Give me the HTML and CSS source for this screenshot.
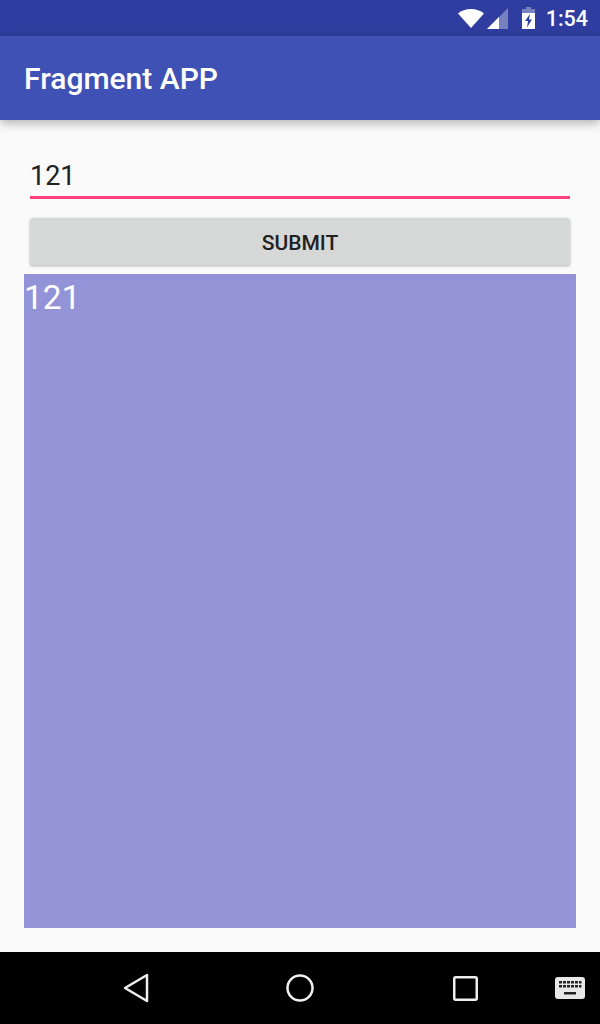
FILE: index.html
```html
<!DOCTYPE html>
<html>
<head>
    <title>Fragment APP</title>
    <link rel="stylesheet" href="styles.css">
</head>
<body>
  <div class="phone">
    <div class="statusbar">
      <svg class="ic-wifi" width="26" height="19" viewBox="0 0 26 19"><path d="M0 4.500C3.500 1.700 8 0 13 0S22.500 1.700 26 4.500L13 19z" fill="#fff"/></svg>
      <svg class="ic-signal" width="21" height="21" viewBox="0 0 21 21"><path d="M21 0V21H0z" fill="#fff" fill-opacity=".35"/><path d="M12 9V21H0z" fill="#fff"/></svg>
      <svg class="ic-battery" width="13" height="22" viewBox="0 0 13 22"><path d="M4 0H9V2H13V6H0V2H4z" fill="#fff" fill-opacity=".35"/><path fill-rule="evenodd" d="M0 6H13V22H0zM8 7 3 14H6L5 20.500 10 12.500H7z" fill="#fff"/></svg>
      <span class="clock">1:54</span>
    </div>
    <div class="toolbar">Fragment APP</div>
    <div class="content">
      <div class="field">121</div>
      <button class="submit">SUBMIT</button>
      <div class="fragment">121</div>
    </div>
    <div class="navbar">
      <svg class="ic-back" width="26" height="30" viewBox="0 0 26 30"><path d="M24 2V28L2 15z" fill="none" stroke="#eee" stroke-width="2.500" stroke-linejoin="round"/></svg>
      <svg class="ic-home" width="28" height="28" viewBox="0 0 28 28"><circle cx="14" cy="14" r="12.500" fill="none" stroke="#eee" stroke-width="2.500"/></svg>
      <svg class="ic-recent" width="25" height="25" viewBox="0 0 25 25"><rect x="1.250" y="1.250" width="22.500" height="22.500" rx="1.500" fill="none" stroke="#eee" stroke-width="2.500"/></svg>
      <svg class="ic-keyboard" width="30" height="22" viewBox="0 0 30 22">
        <rect width="30" height="22" rx="3" fill="#e8e8e8"/>
        <path d="M4 4h3v2.500H4zM8 4h3v2.500H8zM12 4h3v2.500h-3zM16 4h3v2.500h-3zM20 4h3v2.500h-3zM24 4h2.500v2.500H24zM4 8h3v2.500H4zM8 8h3v2.500H8zM12 8h3v2.500h-3zM16 8h3v2.500h-3zM20 8h3v2.500h-3zM24 8h2.500v2.500H24zM9 15h12v2.500H9z" fill="#222"/>
      </svg>
    </div>
  </div>
</body>
</html>
```

FILE: styles.css
```css
/* Resetting default margin and padding */
body, button {
    margin: 0;
    padding: 0;
    box-sizing: border-box;
}

body {
    font-family: Roboto, sans-serif;
    background-color: #fafafa;
}

.phone {
    display: flex;
    flex-direction: column;
    width: 600px;
    height: 1024px;
    overflow: hidden;
}

/* Status bar */
.statusbar {
    display: flex;
    align-items: center;
    justify-content: flex-end;
    height: 36px;
    padding-right: 12px;
    background-color: #2e3d9f;
}

.ic-wifi {
    margin-right: 3px;
}

.ic-signal {
    margin-right: 14px;
}

.ic-battery {
    margin-right: 11px;
}

.clock {
    color: #fff;
    font-size: 21.500px;
    font-weight: 500;
}

/* Toolbar */
.toolbar {
    position: relative;
    height: 84px;
    padding-left: 24px;
    line-height: 85px;
    color: #fff;
    font-size: 30px;
    font-weight: 500;
    background-color: #3f51b5;
    box-shadow: 0 3px 10px rgba(0, 0, 0, 0.3);
}

/* Main content */
.content {
    flex: 1;
    padding: 32px 24px 24px;
    display: flex;
    flex-direction: column;
}

.field {
    height: 47px;
    margin: 0 6px;
    padding-top: 6px;
    box-sizing: border-box;
    border-bottom: 3px solid #ff4081;
    color: #212121;
    font-size: 27px;
    line-height: 36px;
}

.submit {
    height: 47px;
    margin: 19px 6px 9px;
    padding-top: 2px;
    border: none;
    border-radius: 3px;
    color: #212121;
    font-family: Roboto, sans-serif;
    font-size: 21px;
    font-weight: 500;
    background-color: #d6d7d7;
    box-shadow: 0 1px 3px rgba(0, 0, 0, 0.3);
}

.fragment {
    flex: 1;
    color: #fff;
    font-size: 33.500px;
    line-height: 48px;
    background-color: #9393d7;
}

/* Navigation bar */
.navbar {
    position: relative;
    height: 72px;
    background-color: #000;
}

.navbar svg {
    position: absolute;
}

.ic-back {
    left: 123px;
    top: 21px;
}

.ic-home {
    left: 286px;
    top: 22px;
}

.ic-recent {
    left: 453px;
    top: 24px;
}

.ic-keyboard {
    left: 555px;
    top: 25px;
}
```
